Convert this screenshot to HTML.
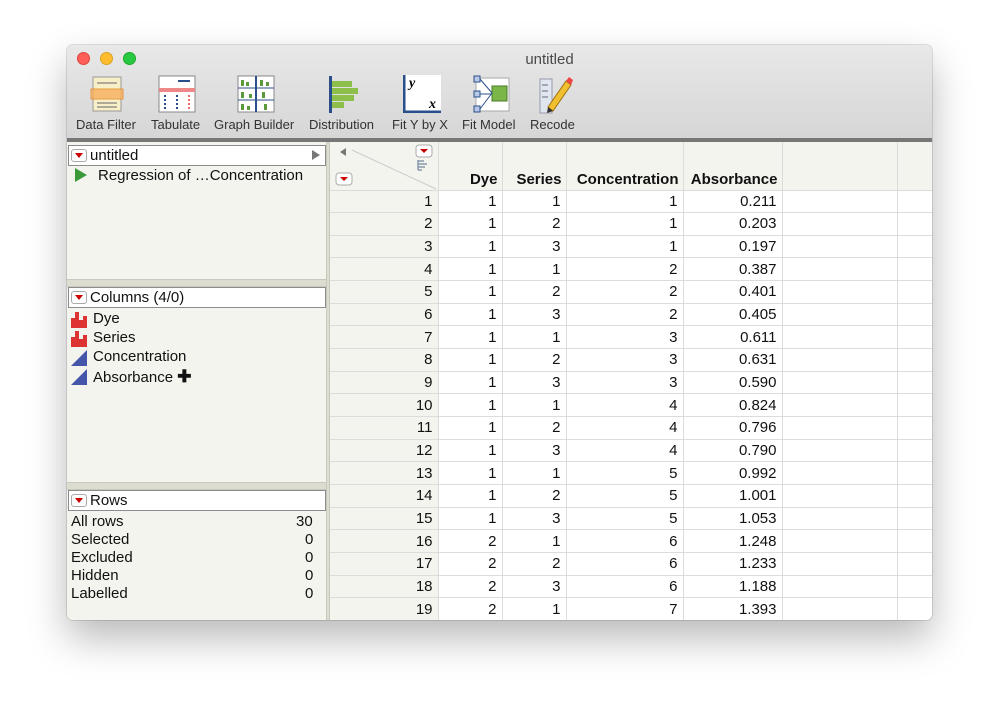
<!DOCTYPE html>
<html><head><meta charset="utf-8"><style>
*{box-sizing:border-box;margin:0;padding:0}
body{width:999px;height:709px;background:#fff;font-family:"Liberation Sans",sans-serif;position:relative;overflow:hidden}
.win{position:absolute;left:67px;top:45px;width:865px;height:575px;border-radius:6px;background:#f4f4ef;box-shadow:0 18px 40px rgba(0,0,0,.28),0 0 0 1px rgba(0,0,0,.12);overflow:hidden}
.top{position:absolute;left:0;top:0;width:865px;height:93px;background:linear-gradient(#e8e8e8,#d6d6d6)}
.title{position:absolute;left:0;width:865px;top:6px;text-align:center;font-size:15px;color:#4a4a4a;padding-left:100px}
.dot{position:absolute;top:7px;width:13px;height:13px;border-radius:50%}
.tb{position:absolute;top:72px;font-size:13px;color:#333;white-space:nowrap}
.ic{position:absolute;top:30px}
.sep{position:absolute;left:0;top:93px;width:865px;height:4px;background:#777}
.lp{position:absolute;left:0;top:97px;width:259px;height:478px;background:#f4f4ef}
.vs{position:absolute;left:259px;top:97px;width:4px;height:478px;background:#dcdcd0;border-left:1px solid #c8c8bc;border-right:1px solid #c8c8bc}
.box{position:absolute;left:1px;width:258px;height:21px;background:#fff;border:1px solid #8c8c8c;font-size:15px;line-height:19px;padding-left:21px;color:#111}
.tri{position:absolute;left:2px;top:3px;width:16px;height:13px;border:1px solid #aaa;border-radius:3px;background:#fff}
.tri:after{content:"";position:absolute;left:3px;top:3px;border-left:4.5px solid transparent;border-right:4.5px solid transparent;border-top:5px solid #c00}
.hs{position:absolute;left:0;width:259px;height:8px;background:#dcdcd0;border-top:1px solid #c8c8bc;border-bottom:1px solid #c8c8bc}
.t{position:absolute;font-size:15px;color:#111}
table{position:absolute;left:263px;top:97px;width:607px;border-collapse:collapse;table-layout:fixed;font-size:15px}
td{height:22.67px;border-right:1px solid #dcdcdc;border-bottom:1px solid #dcdcdc;text-align:right;padding-right:5px;background:#fff;color:#111;white-space:nowrap}
td:first-child{background:#f4f4ef}
tr.h td{height:48px;background:#f4f4ef;font-weight:bold;vertical-align:bottom;padding-bottom:2px;padding-right:4px}
</style></head><body>
<div class="win">
<div class="top">
<div class="dot" style="left:10px;background:#fd5f57;border:1px solid #e0443e"></div>
<div class="dot" style="left:33px;background:#febc2e;border:1px solid #dea123"></div>
<div class="dot" style="left:56px;background:#28c840;border:1px solid #1aab29"></div>
<div class="title">untitled</div>
<svg class="ic" style="left:22px" width="36" height="38"><rect x="4" y="2" width="28" height="34" fill="#f6efc8" stroke="#999"/><rect x="2" y="14" width="32" height="10" fill="#f8b060" opacity=".8" stroke="#e88a20"/><g stroke="#666"><line x1="8" y1="8" x2="28" y2="8"/><line x1="8" y1="28" x2="28" y2="28"/><line x1="8" y1="32" x2="28" y2="32"/></g></svg>
<div class="tb" style="left:9px">Data Filter</div>
<svg class="ic" style="left:91px" width="38" height="38"><rect x="1" y="1" width="36" height="36" fill="#fff" stroke="#888"/><rect x="1" y="13" width="36" height="4" fill="#e88"/><g stroke="#2a4f8a" stroke-width="2"><line x1="20" y1="6" x2="32" y2="6"/><line x1="7" y1="20" x2="7" y2="34" stroke-dasharray="2 2"/><line x1="19" y1="20" x2="19" y2="34" stroke-dasharray="2 2"/></g><line x1="31" y1="20" x2="31" y2="34" stroke="#e66" stroke-width="2" stroke-dasharray="2 2"/></svg>
<div class="tb" style="left:84px">Tabulate</div>
<svg class="ic" style="left:170px" width="38" height="38"><rect x="1" y="1" width="36" height="36" fill="#fff" stroke="#888"/><line x1="19" y1="1" x2="19" y2="37" stroke="#2a4f8a" stroke-width="2"/><line x1="1" y1="13" x2="37" y2="13" stroke="#2a4f8a"/><line x1="1" y1="25" x2="37" y2="25" stroke="#2a4f8a"/><g fill="#5a9a3a"><rect x="4" y="5" width="3" height="6"/><rect x="9" y="7" width="3" height="4"/><rect x="23" y="5" width="3" height="6"/><rect x="29" y="7" width="3" height="4"/><rect x="4" y="17" width="3" height="6"/><rect x="12" y="19" width="3" height="4"/><rect x="25" y="17" width="3" height="6"/><rect x="4" y="29" width="3" height="6"/><rect x="10" y="31" width="3" height="4"/><rect x="27" y="29" width="3" height="6"/></g></svg>
<div class="tb" style="left:147px">Graph Builder</div>
<svg class="ic" style="left:262px" width="36" height="38"><rect x="0" y="1" width="3" height="37" fill="#2a4f8a"/><rect x="3" y="6" width="20" height="6" fill="#8cc04a"/><rect x="3" y="13" width="26" height="6" fill="#8cc04a"/><rect x="3" y="20" width="22" height="6" fill="#8cc04a"/><rect x="3" y="27" width="12" height="6" fill="#8cc04a"/></svg>
<div class="tb" style="left:242px">Distribution</div>
<svg class="ic" style="left:336px" width="38" height="38"><rect x="0" y="0" width="38" height="38" fill="#fff"/><path d="M1 0V37H38" stroke="#2a4f8a" stroke-width="3" fill="none"/><text x="6" y="12" font-family="Liberation Serif" font-style="italic" font-weight="bold" font-size="14">y</text><text x="26" y="33" font-family="Liberation Serif" font-style="italic" font-weight="bold" font-size="14">x</text></svg>
<div class="tb" style="left:325px">Fit Y by X</div>
<svg class="ic" style="left:406px" width="38" height="38"><rect x="3" y="3" width="33" height="33" fill="#fff" stroke="#aaa"/><rect x="19" y="11" width="15" height="15" fill="#7ab648" stroke="#4a7a28"/><g fill="#b8c8e8" stroke="#2a4f8a"><rect x="1" y="1" width="6" height="6"/><rect x="1" y="16" width="6" height="6"/><rect x="1" y="31" width="6" height="6"/></g><path d="M7 4L19 18M7 19H19M7 34L19 18" stroke="#2a4f8a" fill="none"/></svg>
<div class="tb" style="left:395px">Fit Model</div>
<svg class="ic" style="left:471px" width="36" height="40"><rect x="2" y="4" width="12" height="34" fill="#dfe6ef" stroke="#99a"/><g stroke="#667"><line x1="4" y1="10" x2="10" y2="10"/><line x1="4" y1="16" x2="10" y2="16"/><line x1="4" y1="22" x2="10" y2="22"/></g><path d="M10 32L28 6L33 10L15 36Z" fill="#f0c030" stroke="#a07010"/><path d="M28 6L31 2L35 5L33 10Z" fill="#e44"/><path d="M10 32L9 38L15 36Z" fill="#333"/></svg>
<div class="tb" style="left:463px">Recode</div>
</div>
<div class="sep"></div>
<div class="lp">
<div class="box" style="top:3px"><span class="tri"></span>untitled<span style="position:absolute;right:5px;top:4px;border-top:5px solid transparent;border-bottom:5px solid transparent;border-left:8px solid #777"></span></div>
<svg style="position:absolute;left:7px;top:26px" width="14" height="14"><path d="M1 0L13 7L1 14Z" fill="#3a9a3a"/></svg>
<div class="t" style="left:31px;top:25px">Regression of …Concentration</div>
<div class="hs" style="top:137px"></div>
<div class="box" style="top:145px"><span class="tri"></span>Columns (4/0)</div>
<svg style="position:absolute;left:4px;top:170px" width="16" height="16"><path d="M0 16V6H4V0H8V8H12V4H16V16Z" fill="#d33"/></svg>
<div class="t" style="left:26px;top:168px">Dye</div>
<svg style="position:absolute;left:4px;top:189px" width="16" height="16"><path d="M0 16V6H4V0H8V8H12V4H16V16Z" fill="#d33"/></svg>
<div class="t" style="left:26px;top:187px">Series</div>
<svg style="position:absolute;left:4px;top:208px" width="16" height="16"><path d="M0 16L16 0V16Z" fill="#4455aa"/></svg>
<div class="t" style="left:26px;top:206px">Concentration</div>
<svg style="position:absolute;left:4px;top:227px" width="16" height="16"><path d="M0 16L16 0V16Z" fill="#4455aa"/></svg>
<div class="t" style="left:26px;top:225px">Absorbance <b style="font-size:17px">✚</b></div>
<div class="hs" style="top:340px"></div>
<div class="box" style="top:348px"><span class="tri"></span>Rows</div>
<div class="t" style="left:4px;top:371px">All rows</div><div class="t" style="left:229px;top:371px">30</div>
<div class="t" style="left:4px;top:389px">Selected</div><div class="t" style="left:238px;top:389px">0</div>
<div class="t" style="left:4px;top:407px">Excluded</div><div class="t" style="left:238px;top:407px">0</div>
<div class="t" style="left:4px;top:425px">Hidden</div><div class="t" style="left:238px;top:425px">0</div>
<div class="t" style="left:4px;top:443px">Labelled</div><div class="t" style="left:238px;top:443px">0</div>
</div>
<div class="vs"></div>
<table>
<colgroup><col style="width:108px"><col style="width:64px"><col style="width:64px"><col style="width:117px"><col style="width:99px"><col style="width:115px"><col style="width:40px"></colgroup>
<tr class="h"><td style="position:relative"><svg style="position:absolute;left:0;top:0" width="108" height="48"><path d="M10 10L16 6V14Z" fill="#777"/><line x1="22" y1="8" x2="106" y2="47" stroke="#ccc"/><rect x="86" y="3" width="16" height="12" rx="3" fill="#fff" stroke="#aaa"/><path d="M90 7H98L94 11Z" fill="#c00"/><rect x="6" y="31" width="16" height="12" rx="3" fill="#fff" stroke="#aaa"/><path d="M10 35H18L14 39Z" fill="#c00"/><g stroke="#8899aa" stroke-width="1.5"><line x1="88" y1="18" x2="88" y2="28"/><line x1="88" y1="19" x2="94" y2="19"/><line x1="88" y1="22" x2="97" y2="22"/><line x1="88" y1="25" x2="95" y2="25"/><line x1="88" y1="28" x2="92" y2="28"/></g></svg></td><td>Dye</td><td>Series</td><td>Concentration</td><td>Absorbance</td><td></td><td></td></tr>
<tr><td>1</td><td>1</td><td>1</td><td>1</td><td>0.211</td><td></td><td></td></tr>
<tr><td>2</td><td>1</td><td>2</td><td>1</td><td>0.203</td><td></td><td></td></tr>
<tr><td>3</td><td>1</td><td>3</td><td>1</td><td>0.197</td><td></td><td></td></tr>
<tr><td>4</td><td>1</td><td>1</td><td>2</td><td>0.387</td><td></td><td></td></tr>
<tr><td>5</td><td>1</td><td>2</td><td>2</td><td>0.401</td><td></td><td></td></tr>
<tr><td>6</td><td>1</td><td>3</td><td>2</td><td>0.405</td><td></td><td></td></tr>
<tr><td>7</td><td>1</td><td>1</td><td>3</td><td>0.611</td><td></td><td></td></tr>
<tr><td>8</td><td>1</td><td>2</td><td>3</td><td>0.631</td><td></td><td></td></tr>
<tr><td>9</td><td>1</td><td>3</td><td>3</td><td>0.590</td><td></td><td></td></tr>
<tr><td>10</td><td>1</td><td>1</td><td>4</td><td>0.824</td><td></td><td></td></tr>
<tr><td>11</td><td>1</td><td>2</td><td>4</td><td>0.796</td><td></td><td></td></tr>
<tr><td>12</td><td>1</td><td>3</td><td>4</td><td>0.790</td><td></td><td></td></tr>
<tr><td>13</td><td>1</td><td>1</td><td>5</td><td>0.992</td><td></td><td></td></tr>
<tr><td>14</td><td>1</td><td>2</td><td>5</td><td>1.001</td><td></td><td></td></tr>
<tr><td>15</td><td>1</td><td>3</td><td>5</td><td>1.053</td><td></td><td></td></tr>
<tr><td>16</td><td>2</td><td>1</td><td>6</td><td>1.248</td><td></td><td></td></tr>
<tr><td>17</td><td>2</td><td>2</td><td>6</td><td>1.233</td><td></td><td></td></tr>
<tr><td>18</td><td>2</td><td>3</td><td>6</td><td>1.188</td><td></td><td></td></tr>
<tr><td>19</td><td>2</td><td>1</td><td>7</td><td>1.393</td><td></td><td></td></tr>
</table>
</div>
</body></html>
